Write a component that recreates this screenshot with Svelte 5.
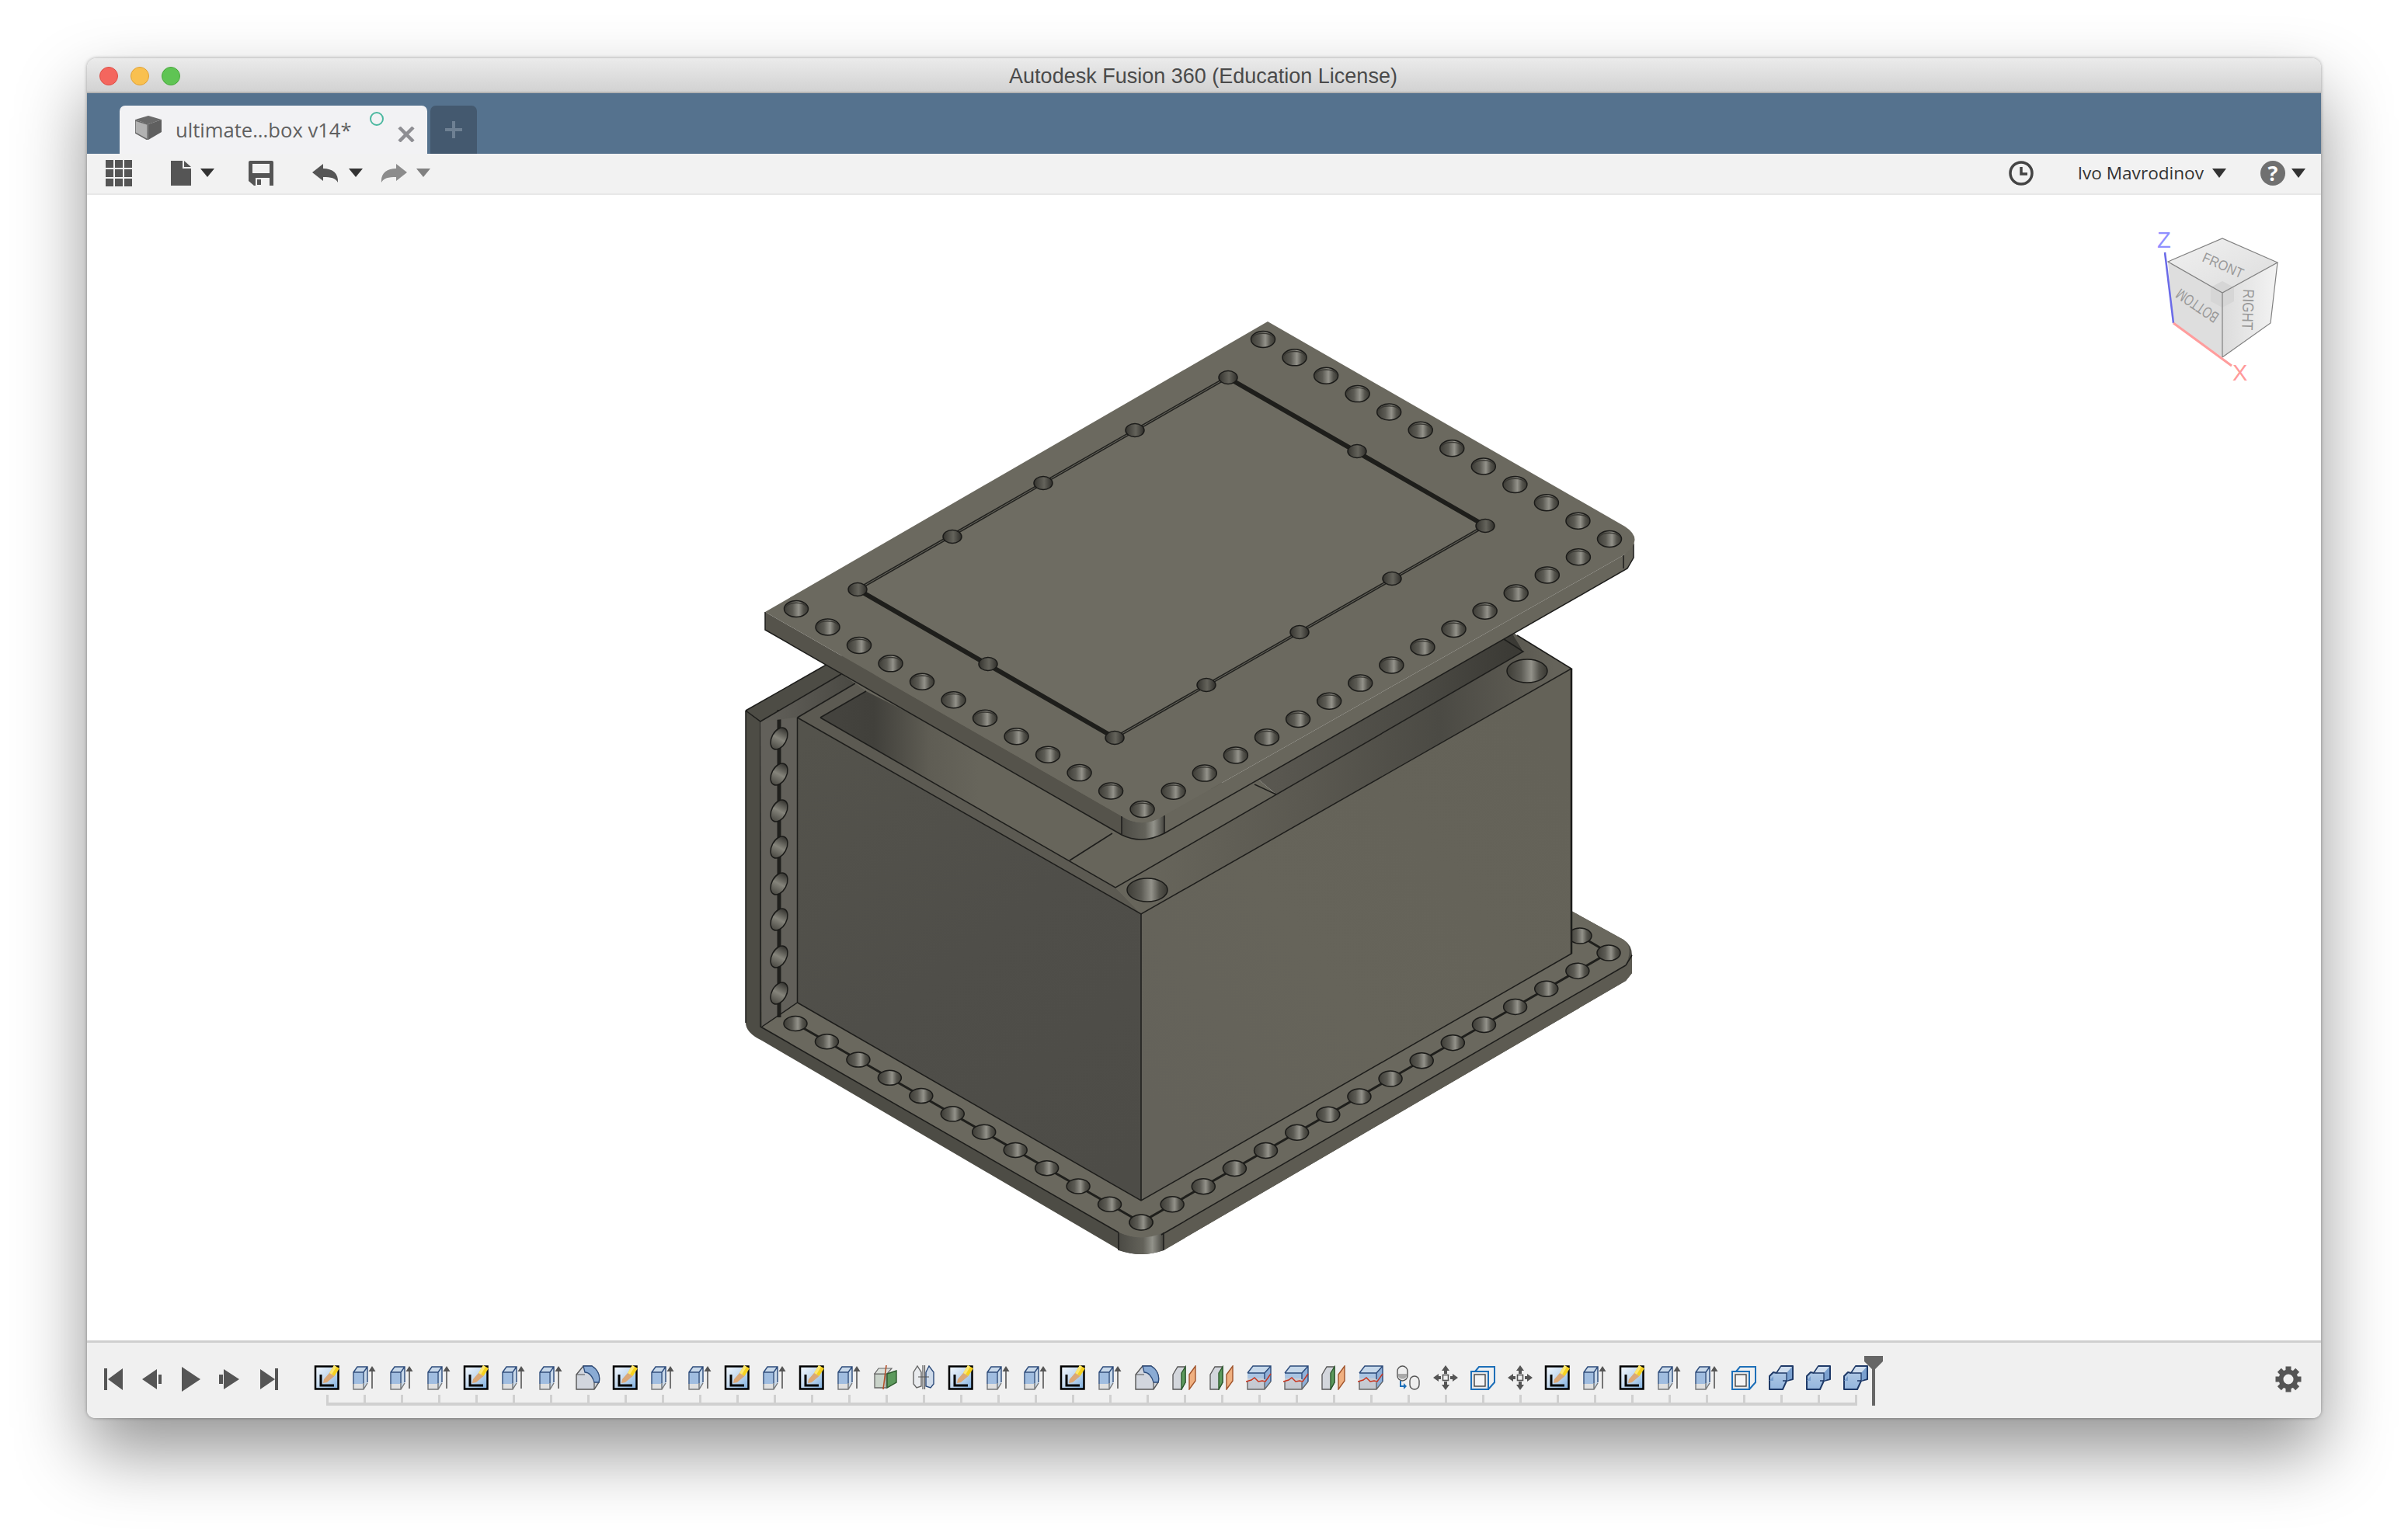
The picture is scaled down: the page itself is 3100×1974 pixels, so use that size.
<script>
  const line = (x0, y0, x1, y1, n) =>
    Array.from({ length: n }, (_, i) => [x0 + ((x1 - x0) * i) / (n - 1), y0 + ((y1 - y0) * i) / (n - 1)]);

  const lidHoles = [
    ...line(1626, 437, 2072, 694, 12),
    ...line(2072, 694, 1470.6, 1042, 16).slice(1),
    ...line(1025, 784, 1470.6, 1042, 12).slice(0, -1)
  ];
  const groovePins = [
    [1581, 486], [1461, 554], [1343, 622], [1226, 691], [1104, 759], [1272, 855], [1435, 950],
    [1553, 882], [1673, 814], [1792, 745], [1912, 677], [1747, 581]
  ];
  const lowerRight = line(1469, 1574, 2071, 1227, 16);
  const lowerLeft = line(1024, 1318, 1469, 1574, 12);
  const stripHoles = [951, 997, 1044, 1091, 1138, 1184, 1232, 1279];

  const S = 'sketch', E = 'ext', F = 'fillet', G = 'splitcube', M = 'mirror', O = 'splitface',
    W = 'wave', J = 'joint', V = 'move', C = 'copy', B = 'combine';
  const features = [
    S, E, E, E, S, E, E, F, S, E, E, S, E, S, E, G, M, S, E, E, S, E, F, O, O, W, W, O, W, J, V, C, V,
    S, E, S, E, E, C, B, B, B
  ];
</script>

<div class="page">
  <div class="window">
    <header class="titlebar">
      <svg class="lights" width="104" height="24" viewBox="0 0 104 24">
        <circle cx="12" cy="12" r="11.5" fill="#f4665e" stroke="#de4f47" />
        <circle cx="52" cy="12" r="11.5" fill="#f9c04f" stroke="#dfa239" />
        <circle cx="92" cy="12" r="11.5" fill="#5fc454" stroke="#4aa83f" />
      </svg>
      <span class="title">Autodesk Fusion 360 (Education License)</span>
    </header>

    <div class="tabbar">
      <div class="tab">
        <svg class="tabcube" width="34" height="31" viewBox="0 0 34 31">
          <path d="M0 6 L16 11 V31 L0 22 Z" fill="#b2b2b2" stroke="#666" stroke-width="1.5" />
          <path d="M0 5 L17 0 L34 5 L17 11 Z" fill="#6a6a6a" />
          <path d="M17 11 L34 5 V21 L17 31 Z" fill="#5f5f5f" />
        </svg>
        <span class="tabname">ultimate...box v14*</span>
        <svg class="tabdot" width="20" height="20" viewBox="0 0 20 20">
          <circle cx="10" cy="10" r="8" fill="none" stroke="#4cb8a0" stroke-width="2" />
        </svg>
        <svg class="tabclose" width="22" height="20" viewBox="0 0 22 20">
          <path d="M2 1 L20 19 M20 1 L2 19" stroke="#8e8e93" stroke-width="4.5" fill="none" />
        </svg>
      </div>
      <div class="newtab">
        <svg width="22" height="22" viewBox="0 0 22 22">
          <path d="M11 0 V22 M0 11 H22" stroke="#6e8093" stroke-width="4" fill="none" />
        </svg>
      </div>
    </div>

    <div class="toolbar">
      <svg class="i-grid" width="34" height="34" viewBox="0 0 34 34">
        {#each [0, 12, 24] as y}
          {#each [0, 12, 24] as x}
            <rect {x} {y} width="10" height="10" fill="#555" />
          {/each}
        {/each}
      </svg>
      <svg class="i-doc" width="26" height="32" viewBox="0 0 26 32">
        <path d="M0 0 H15 V10 H26 V32 H0 Z M17 0 L26 8 H17 Z" fill="#555" />
      </svg>
      <svg class="caret c-doc" width="18" height="11" viewBox="0 0 18 11"><path d="M0 0 H18 L9 11 Z" /></svg>
      <svg class="i-save" width="32" height="32" viewBox="0 0 32 32">
        <path fill-rule="evenodd" fill="#555" d="M2 0 H30 Q32 0 32 2 V32 H7 L0 26 V2 Q0 0 2 0 Z M5 4 V16 H27 V4 Z M9 22 V32 H27 V22 Z" />
        <rect x="11" y="24" width="5" height="7" fill="#555" />
      </svg>
      <svg class="i-undo" width="34" height="24" viewBox="0 0 34 24">
        <path d="M0 11 L14 0 V6 C26 6 34 12 33 24 C30 18 24 17 14 17 V22 Z" fill="#555" />
      </svg>
      <svg class="caret c-undo" width="18" height="11" viewBox="0 0 18 11"><path d="M0 0 H18 L9 11 Z" /></svg>
      <svg class="i-redo" width="34" height="24" viewBox="0 0 34 24">
        <path d="M34 11 L20 0 V6 C8 6 0 12 1 24 C4 18 10 17 20 17 V22 Z" fill="#8c8c8c" />
      </svg>
      <svg class="caret c-redo" width="18" height="11" viewBox="0 0 18 11"><path d="M0 0 H18 L9 11 Z" fill="#808080" /></svg>

      <svg class="i-clock" width="32" height="32" viewBox="0 0 32 32">
        <circle cx="16" cy="16" r="14" fill="none" stroke="#444" stroke-width="3.5" />
        <path d="M16 8 V17 H24" fill="none" stroke="#444" stroke-width="3.5" />
      </svg>
      <span class="user">Ivo Mavrodinov</span>
      <svg class="caret c-user" width="18" height="12" viewBox="0 0 18 12"><path d="M0 0 H18 L9 12 Z" /></svg>
      <div class="help">?</div>
      <svg class="caret c-help" width="18" height="12" viewBox="0 0 18 12"><path d="M0 0 H18 L9 12 Z" /></svg>
    </div>

    <main class="viewport">
      <svg class="scene" width="2876" height="1475" viewBox="112 251 2876 1475">
        <defs>
          <linearGradient id="hole" x1="0" x2="1" y1="0" y2="0">
            <stop offset="0" stop-color="#3e3d37" />
            <stop offset="0.35" stop-color="#5c5b54" />
            <stop offset="0.6" stop-color="#93928a" />
            <stop offset="0.8" stop-color="#55544d" />
            <stop offset="1" stop-color="#3a3933" />
          </linearGradient>
          <linearGradient id="pin" x1="0" x2="1" y1="0" y2="0">
            <stop offset="0" stop-color="#35342f" />
            <stop offset="0.55" stop-color="#64635b" />
            <stop offset="1" stop-color="#2f2e2a" />
          </linearGradient>
          <linearGradient id="slot" x1="0" x2="0" y1="0" y2="1">
            <stop offset="0" stop-color="#33322e" />
            <stop offset="0.5" stop-color="#85847b" />
            <stop offset="1" stop-color="#4a4943" />
          </linearGradient>
          <linearGradient id="cyl" x1="0" x2="1" y1="0" y2="0">
            <stop offset="0" stop-color="#4b4a44" />
            <stop offset="0.55" stop-color="#63625a" />
            <stop offset="0.75" stop-color="#92928a" />
            <stop offset="1" stop-color="#45443e" />
          </linearGradient>
          <linearGradient id="leftFace" gradientUnits="userSpaceOnUse" x1="1030" y1="950" x2="1460" y2="1500">
            <stop offset="0" stop-color="#54534c" />
            <stop offset="0.5" stop-color="#4f4e49" />
            <stop offset="1" stop-color="#4d4c47" />
          </linearGradient>
          <linearGradient id="rightFace" gradientUnits="userSpaceOnUse" x1="1469" y1="1400" x2="2023" y2="1000">
            <stop offset="0" stop-color="#64625a" />
            <stop offset="0.4" stop-color="#66645a" />
            <stop offset="1" stop-color="#646258" />
          </linearGradient>
          <linearGradient id="channel" gradientUnits="userSpaceOnUse" x1="1080" y1="0" x2="1260" y2="0">
            <stop offset="0" stop-color="#44433e" />
            <stop offset="0.25" stop-color="#41403b" />
            <stop offset="0.65" stop-color="#5f5d54" />
            <stop offset="1" stop-color="#67655b" />
          </linearGradient>
          <linearGradient id="backChannel" gradientUnits="userSpaceOnUse" x1="1640" y1="0" x2="1950" y2="0">
            <stop offset="0" stop-color="#595750" />
            <stop offset="0.6" stop-color="#4b4a44" />
            <stop offset="1" stop-color="#3b3a35" />
          </linearGradient>
          <linearGradient id="band" gradientUnits="userSpaceOnUse" x1="1480" y1="0" x2="2000" y2="0">
            <stop offset="0" stop-color="#67655b" />
            <stop offset="0.4" stop-color="#5a5850" />
            <stop offset="0.72" stop-color="#4b4a44" />
            <stop offset="0.9" stop-color="#5a5850" />
            <stop offset="1" stop-color="#65635a" />
          </linearGradient>
          <linearGradient id="flangeBack" gradientUnits="userSpaceOnUse" x1="980" y1="0" x2="1100" y2="0">
            <stop offset="0" stop-color="#62605a" />
            <stop offset="1" stop-color="#4a4943" />
          </linearGradient>
          <linearGradient id="cubeTop" x1="0" x2="1" y1="0" y2="1">
            <stop offset="0" stop-color="#f1f1f1" />
            <stop offset="1" stop-color="#dcdcdc" />
          </linearGradient>
          <linearGradient id="cubeRight" x1="0" x2="1" y1="0" y2="0">
            <stop offset="0" stop-color="#dcdcdc" />
            <stop offset="1" stop-color="#f3f3f3" />
          </linearGradient>
        </defs>

        <!-- lower part: flange -->
        <path class="flange-edge" d="M960 915 L1100 835 L2023 1173 L2090 1210 Q2101 1217 2101 1230 L2101 1253 L2093 1263 L1498 1610 Q1469 1620 1442 1610 L981 1340 Q960 1330 960 1317 Z" />
        <path class="flange-side-r" d="M1495 1590 L2093 1243 L2101 1230 L2101 1253 L2093 1263 L1498 1610 Z" />
        <path class="flange-face" d="M979 929 L1100 860 L2023 1173 L2090 1210 Q2101 1217 2096 1235 L2093 1243 L1495 1590 Q1469 1600 1440 1587 L981 1322 Z" />
        <path class="cyl" d="M1440 1587 Q1469 1600 1498 1587 V1610 Q1469 1620 1440 1610 Z" />
        <path class="edge" d="M960 915 V1317 M979 929 V1322 L1440 1587 M1495 1590 L2093 1243 M1440 1587 V1610 M1498 1587 V1610" />
        <path class="edge" d="M2093 1243 L2101 1230" />
        <path class="flange-strip" d="M979 929 L1027 924 V1291 L981 1322 Z" />

        <!-- holes in flange, with the slot that links them -->
        <path class="slot" d="M1003 914 V1310" />
        <path class="slot thin" d="M1024 1318 L1469 1574 L2071 1227 L2034 1205" />
        {#each stripHoles as y}
          <ellipse cx="1003" cy={y} rx="9.5" ry="15" transform="rotate(28 1003 {y})" fill="url(#slot)" class="hole-edge" />
        {/each}
        {#each lowerLeft as [x, y]}
          <ellipse cx={x} cy={y} rx="15" ry="9.5" fill="url(#hole)" class="hole-edge" />
        {/each}
        {#each lowerRight as [x, y]}
          <ellipse cx={x} cy={y} rx="15" ry="10" fill="url(#hole)" class="hole-edge" />
        {/each}
        <ellipse cx="2034" cy="1205" rx="15" ry="10" fill="url(#hole)" class="hole-edge" />

        <!-- box body -->
        <path fill="url(#leftFace)" d="M1026.5 924 L1469 1177 V1546 L1026.5 1291 Z" />
        <path fill="url(#rightFace)" d="M1469 1177 L2023 861 V1228 L1469 1546 Z" />
        <path class="edge" d="M1026.5 924 V1291 L1469 1546 L2023 1228 V861 M1469 1177 V1546 M981 1322 L1026.5 1291" />
        <path class="edge heavy" d="M2023 861 V1228" />

        <!-- box rim and the recess in it -->
        <path fill="url(#flangeBack)" d="M979 929 L1083 868 L1101 880 L1026.5 924 Z" />
        <path class="edge" d="M960 915 L1083 845 M960 915 L979 929 L1083 868" />
        <path class="rim" d="M1026.5 924 L1101 880 L1115 890 L1056 924 L1436 1143 L1469 1177 Z" />
        <path fill="url(#channel)" d="M1056 924 L1115 890 L1450 1060 L1377 1108 L1436 1143 Z" />
        <path class="deck" d="M1377 1108 L1432 1073 L1499 1050 L1610 995 L1643 1023 L1436 1143 Z" />
        <path fill="url(#backChannel)" d="M1610 995 L1945 805 L1961 839 L1643 1023 Z" />
        <path fill="url(#band)" d="M1436 1143 L1961 839 L1945 813 L2023 861 L1469 1177 Z" />
        <path class="edge" d="M1026.5 924 L1469 1177 L2023 861 L1953 818 M1056 924 L1436 1143 L1961 839 L1936 823 M1056 924 L1115 890 M1026.5 924 L1101 880 M1377 1108 L1432 1073 M1615 1010 L1643 1023" />
        <ellipse cx="1477" cy="1146" rx="26" ry="15" fill="url(#hole)" class="hole-edge" />
        <ellipse cx="1966" cy="864" rx="26" ry="15" fill="url(#hole)" class="hole-edge" />

        <!-- lid -->
        <path class="lid-left" d="M985 788 L1444 1051 V1075 L985 811 Z" />
        <path class="lid-right" d="M1499 1050 L2090 715 L2103 700 V718 L2095 732 L1499 1073 Z" />
        <path class="cyl" d="M1444 1051 Q1470 1068 1499 1050 V1073 Q1470 1088 1444 1075 Z" />
        <path class="edge" d="M985 788 V811 L1444 1075 Q1470 1088 1499 1073 L2095 732 L2103 718 V700 M1444 1051 V1075 M1499 1050 V1073 M2090 715 V732" />
        <path class="lid-top" d="M1632 414 L2092 678 Q2118 695 2090 715 L1499 1050 Q1470 1068 1444 1051 L985 788 Z" />
        <path class="panel-slot" d="M1580 486 L1912 677 L1435 950 L1104 759 Z" />
        <path class="panel-heavy" d="M1104 759 L1435 950 M1580 486 L1912 677" />
        <path class="panel-light" d="M1104 759 L1580 486 M1435 950 L1912 677" />
        {#each groovePins as [x, y]}
          <ellipse cx={x} cy={y} rx="12" ry="8.5" fill="url(#pin)" class="hole-edge" />
        {/each}
        {#each lidHoles as [x, y]}
          <ellipse cx={x} cy={y} rx="15.5" ry="10.5" fill="url(#hole)" class="hole-edge" />
          <path class="hole-top" d="M{x - 14} {y - 2} A15 9 0 0 1 {x + 14} {y - 2}" />
        {/each}

        <!-- view cube -->
        <g class="cube">
          <path d="M2791 337 L2861 307 L2932 338 L2861 377 Z" fill="url(#cubeTop)" />
          <path d="M2791 337 L2861 377 V460 L2797 416 Z" fill="#dedede" />
          <path d="M2861 377 L2932 338 L2923 416 L2861 460 Z" fill="url(#cubeRight)" />
          <path class="cube-corner" d="M2861 362 L2876 370 V388 L2861 396 L2846 388 V370 Z" />
          <path class="cube-edge" d="M2791 337 L2861 307 L2932 338 L2861 377 Z M2861 377 V460 M2932 338 L2923 416 L2861 460" />
          <text class="cube-text" transform="translate(2834 336) rotate(24) scale(.9 1)" font-size="18">FRONT</text>
          <text class="cube-text" transform="translate(2858 405) rotate(214) scale(.72 1)" font-size="20">BOTTOM</text>
          <text class="cube-text" transform="translate(2888 372) rotate(92) scale(.85 1)" font-size="20">RIGHT</text>
          <path d="M2787 325 L2798 416" stroke="#6a6ae8" stroke-width="2.5" fill="none" />
          <path d="M2798 416 L2873 471" stroke="#ff9d9d" stroke-width="3" fill="none" />
          <text class="axis z" x="2777" y="319">Z</text>
          <text class="axis x" x="2874" y="490">X</text>
        </g>
      </svg>
    </main>

    <footer class="timebar">
      <svg class="controls" width="224" height="32" viewBox="0 0 224 32">
        <path d="M0 2 H4 V30 H0 Z M5 16 L24 2 V30 Z" />
        <path d="M49 16 L68 3 V29 Z M70 10 H74 V22 H70 Z" />
        <path d="M100 0 L124 16 L100 32 Z" />
        <path d="M148 10 H153 V22 H148 Z M154 3 L174 16 L154 29 Z" />
        <path d="M201 3 L220 16 L201 29 Z M220 2 H224 V30 H220 Z" />
      </svg>

      <div class="timeline">
        <div class="features">
          {#each features as f}
            <div class="feature">
              <svg width="34" height="32" viewBox="0 0 34 32"><use href="#ic-{f}" /></svg>
              <div class="tick"></div>
            </div>
          {/each}
        </div>
        <div class="rail"></div>
        <svg class="marker" width="24" height="64" viewBox="0 0 24 64">
          <path d="M0 0 H24 V7 L14 17 V64 H10 V17 L0 7 Z" fill="#666" />
        </svg>
      </div>

      <svg class="gear" width="34" height="34" viewBox="-17 -17 34 34">
        <g fill="#555">
          {#each [0, 45, 90, 135, 180, 225, 270, 315] as a}
            <rect x="-3.5" y="-16.5" width="7" height="7" transform="rotate({a})" />
          {/each}
        </g>
        <circle r="9.5" fill="none" stroke="#555" stroke-width="6" />
      </svg>
    </footer>
  </div>

  <svg class="symbols" width="0" height="0">
    <defs>
      <linearGradient id="skBg" x1="0" y1="0" x2="1" y2="1">
        <stop offset="0" stop-color="#f4f8fc" />
        <stop offset="0.5" stop-color="#c3d9ef" />
        <stop offset="1" stop-color="#7fb0e0" />
      </linearGradient>
      <linearGradient id="cmb" x1="0" y1="0" x2="0" y2="1">
        <stop offset="0" stop-color="#b7cde6" />
        <stop offset="1" stop-color="#94b6de" />
      </linearGradient>
      <linearGradient id="wv" x1="0" y1="0" x2="0" y2="1">
        <stop offset="0" stop-color="#a9c4e2" />
        <stop offset="0.5" stop-color="#a9c4e2" />
        <stop offset="0.55" stop-color="#c8ccd4" />
        <stop offset="1" stop-color="#c4c8d0" />
      </linearGradient>

      <symbol id="ic-sketch" viewBox="0 0 34 32">
        <rect x="2" y="1.5" width="29.5" height="29" fill="url(#skBg)" stroke="#000" stroke-width="2.5" />
        <path d="M9 12 V26 H26" fill="none" stroke="#000" stroke-width="3" />
        <path d="M26 0 L33 4 L26.5 14 L20 10 Z" fill="#f6d21e" />
        <path d="M26 0 L29 2 L23 12 L20 10 Z" fill="#fbe774" />
        <path d="M20 10 L26.5 14 L17 22 L12 23 L13 18 Z" fill="#dba877" />
      </symbol>

      <symbol id="ic-ext" viewBox="0 0 34 32">
        <path d="M3 9 L8 2 H21 V23 L16 31 H3 Z" fill="#c9d9ea" />
        <path d="M4 10 H15 V24 H4 Z" fill="#a0bde0" />
        <path d="M4 24 H15 V30 H4 Z" fill="#e0e0e0" />
        <path d="M3 24 V9 L8 2 H21 V22 M3 9 H16 L21 2 M16 9 V23" fill="none" stroke="#2b4a7a" stroke-width="1.4" />
        <path d="M3 24 V31 H16 L21 23 M16 23 V31" fill="none" stroke="#777" stroke-width="1.4" />
        <path d="M27 8 V30" stroke="#555" stroke-width="1.6" fill="none" />
        <path d="M22.5 8 L27 1 L31.5 8 Z" fill="#555" />
      </symbol>

      <symbol id="ic-fillet" viewBox="0 0 34 32">
        <path d="M2 31 V12 L11 1 H22 C30 6 33 14 31 22 L25 31 Z" fill="#d2d6de" stroke="#555" stroke-width="1.4" />
        <path d="M11 1 L13 9 C18 9 23 14 25 22 L31 22 C33 14 30 6 22 1 Z" fill="#8aabd4" stroke="#2b4a7a" stroke-width="1.3" />
        <path d="M2 12 H13 M25 22 V31" fill="none" stroke="#555" stroke-width="1.2" />
      </symbol>

      <symbol id="ic-splitcube" viewBox="0 0 34 32">
        <path d="M2 11 H17 V29 H2 Z" fill="#c9d3c9" stroke="#666" stroke-width="1.3" />
        <path d="M7 4 H24 L18 11 H2 Z" fill="#dbe0db" stroke="#666" stroke-width="1.2" />
        <path d="M18 11 L30 7 V22 L18 29 Z" fill="#5d9a5d" stroke="#2d5b2d" stroke-width="1.4" />
        <path d="M17 0 L13 31" stroke="#b3502a" stroke-width="1.6" fill="none" />
      </symbol>

      <symbol id="ic-mirror" viewBox="0 0 34 32">
        <path d="M4 9 L9 1 L14 9 V27 L8 29 L4 24 Z" fill="#e9ebee" stroke="#666" stroke-width="1.4" />
        <path d="M20 9 L24 1 L30 9 V24 L26 29 L20 27 Z" fill="#cfdbea" stroke="#2b4a7a" stroke-width="1.4" />
        <path d="M16 0 V31 M18.5 0 V31 M10 15 H24" stroke="#555" stroke-width="1.2" fill="none" />
      </symbol>

      <symbol id="ic-splitface" viewBox="0 0 34 32">
        <path d="M2 12 L8 2 H18 V22 L13 31 H2 Z" fill="#d3d6dc" stroke="#555" stroke-width="1.3" />
        <path d="M13 10 L18 2 V22 L13 31 Z" fill="#5d9a5d" stroke="#2d5b2d" stroke-width="1.4" />
        <path d="M23 31 V12 L31 1 V20 Z" fill="#f0b080" stroke="#a0532a" stroke-width="1.4" />
      </symbol>

      <symbol id="ic-wave" viewBox="0 0 34 32">
        <path d="M2 10 L9 1 H32 V21 L24 31 H2 Z" fill="url(#wv)" />
        <path d="M2 10 L9 1 H32 L24 10 Z" fill="#c6d8ea" />
        <path d="M24 10 L32 1 V21 L24 31 Z" fill="#8fb0d8" />
        <path d="M2 10 L9 1 H32 V21 M2 10 H24 L32 1 M24 10 V18" fill="none" stroke="#2b4a7a" stroke-width="1.4" />
        <path d="M2 21 V31 H24 L32 21 M24 22 V31" fill="none" stroke="#666" stroke-width="1.4" />
        <path d="M0 21 L7 19 L11 16 L16 21 L21 20 L25 21 L32 11" fill="none" stroke="#c8341e" stroke-width="1.5" />
      </symbol>

      <symbol id="ic-joint" viewBox="0 0 34 32">
        <rect x="3" y="1" width="13" height="19" rx="6.5" fill="#eee" stroke="#555" stroke-width="1.4" />
        <path d="M4 11 H15 V14 a6 6 0 0 1 -11 0 Z" fill="#aaa" />
        <rect x="19" y="14" width="12" height="17" rx="6" fill="#eee" stroke="#555" stroke-width="1.4" />
        <path d="M7 20 V27 H14" fill="none" stroke="#1d6fb8" stroke-width="2" />
        <path d="M11 23 L15 27 L11 31" fill="#1d6fb8" />
      </symbol>

      <symbol id="ic-move" viewBox="0 0 34 32">
        <path d="M17 0 L22 7 H19 V11 H15 V7 H12 Z M17 32 L22 25 H19 V21 H15 V25 H12 Z M1 16 L8 11 V14 H11 V18 H8 V21 Z M33 16 L26 11 V14 H23 V18 H26 V21 Z" fill="#555" />
        <rect x="13.5" y="12.5" width="7" height="7" fill="none" stroke="#555" stroke-width="1.6" />
      </symbol>

      <symbol id="ic-copy" viewBox="0 0 34 32">
        <path d="M2 8 H24 V31 H2 Z" fill="#e8e8e8" stroke="#1d6fb8" stroke-width="2" />
        <path d="M7 8 L12 2 H32 V22 L24 31" fill="none" stroke="#1d6fb8" stroke-width="2" />
        <rect x="6" y="12" width="14" height="15" fill="#f4f4f4" stroke="#444" stroke-width="1.4" />
      </symbol>

      <symbol id="ic-combine" viewBox="0 0 34 32">
        <path d="M11 10 L17 1 H32 V18 L24 20 L19 31 H2 V14 L7 9 Z" fill="url(#cmb)" stroke="#1f3a68" stroke-width="2" stroke-linejoin="round" />
        <path d="M12 10 L17 2 H31 L24 10 Z" fill="#d0deee" />
        <path d="M2 20 L7 14 V20 Z M24 10 L31 2 V17 L24 20 Z" fill="#7aa0cf" />
        <path d="M12 10 H24 V20 H19" fill="none" stroke="#1f3a68" stroke-width="1.3" />
      </symbol>
    </defs>
  </svg>
</div>

<style>
  :global(body) {
    margin: 0;
    background: #fff;
  }

  .page {
    width: 3100px;
    height: 1974px;
    padding: 75px 112px 0;
    box-sizing: border-box;
    overflow: hidden;
    background: #fff;
  }

  .window {
    display: flex;
    flex-direction: column;
    width: 2876px;
    height: 1751px;
    border-radius: 12px 12px 10px 10px;
    overflow: hidden;
    box-shadow: 0 44px 90px rgba(0, 0, 0, 0.42), 0 0 4px rgba(0, 0, 0, 0.35);
  }

  .titlebar {
    position: relative;
    flex: none;
    display: flex;
    align-items: center;
    justify-content: center;
    height: 45px;
    box-sizing: border-box;
    background: linear-gradient(#ebebeb, #d2d2d2);
    border-bottom: 2px solid #b5b5b5;
  }

  .lights {
    position: absolute;
    left: 16px;
    top: 11px;
  }

  .title {
    font: 27px "Liberation Sans", Arial, sans-serif;
    color: #4a4a4a;
    margin: 4px 0 0 -2px;
  }

  .tabbar {
    flex: none;
    display: flex;
    align-items: flex-end;
    gap: 4px;
    height: 78px;
    padding-left: 42px;
    background: #55728e;
  }

  .tab {
    display: flex;
    align-items: center;
    width: 396px;
    height: 62px;
    border-radius: 7px 7px 0 0;
    background: #f2f2f4;
  }

  .tabcube {
    margin: -6px 0 0 20px;
    flex: none;
  }

  .tabname {
    margin-left: 18px;
    font: 25.6px "Open Sans", sans-serif;
    color: #606060;
    white-space: nowrap;
  }

  .tabdot {
    position: relative;
    top: -14px;
    margin-left: 22px;
    flex: none;
  }

  .tabclose {
    margin: 11px 0 0 17px;
    flex: none;
  }

  .newtab {
    display: flex;
    align-items: center;
    justify-content: center;
    width: 60px;
    height: 62px;
    border-radius: 7px 7px 0 0;
    background: #44596f;
  }

  .toolbar {
    flex: none;
    display: flex;
    align-items: center;
    height: 53px;
    box-sizing: border-box;
    padding: 0 20px 2px 24px;
    background: #f2f2f2;
    border-bottom: 2px solid #e8e8e8;
  }

  .caret path {
    fill: #333;
  }

  .c-redo path {
    fill: #808080;
  }

  .i-doc { margin-left: 50px; }
  .c-doc { margin-left: 12px; }
  .i-save { margin-left: 44px; }
  .i-undo { margin-left: 50px; }
  .c-undo { margin-left: 13px; }
  .i-redo { margin-left: 23px; }
  .c-redo { margin-left: 12px; }
  .i-clock { margin-left: auto; }
  .c-user { margin-left: 11px; }
  .c-help { margin-left: 8px; }

  .user {
    margin-left: 57px;
    font: 22.6px "Open Sans", sans-serif;
    color: #333;
    white-space: nowrap;
  }

  .help {
    display: flex;
    align-items: center;
    justify-content: center;
    width: 32px;
    height: 32px;
    margin-left: 44px;
    border-radius: 50%;
    background: #707070;
    color: #fff;
    font: bold 27px "Open Sans", sans-serif;
  }

  .viewport {
    flex: none;
    height: 1475px;
    background: #fff;
  }

  .scene {
    display: block;
  }

  .edge {
    fill: none;
    stroke: #1d1d1b;
    stroke-width: 1.5;
  }

  .edge.heavy {
    stroke-width: 2.5;
  }

  .flange-edge { fill: #4d4c45; }
  .flange-side-r { fill: #5d5b52; }
  .flange-face { fill: #6a685e; }
  .flange-strip { fill: #62605a; }
  .rim { fill: #5c5a52; }
  .deck { fill: #67655b; }
  .lid-left { fill: #55534b; }
  .lid-right { fill: #68665c; }
  .lid-top { fill: #6b695f; }

  .cyl {
    fill: url(#cyl);
  }

  .slot {
    fill: none;
    stroke: #1f1f1c;
    stroke-width: 5;
  }

  .slot.thin {
    stroke-width: 3;
  }

  .hole-edge {
    stroke: #1b1b19;
    stroke-width: 1.5;
  }

  .hole-top {
    fill: none;
    stroke: #3a3934;
    stroke-width: 1.5;
  }

  .panel-slot {
    fill: #6e6c62;
    stroke: #232320;
    stroke-width: 4;
    stroke-linejoin: round;
  }

  .panel-heavy {
    fill: none;
    stroke: #1e1e1b;
    stroke-width: 6;
  }

  .panel-light {
    fill: none;
    stroke: #6a6960;
    stroke-width: 1;
  }

  .cube-edge {
    fill: none;
    stroke: #808080;
    stroke-width: 1.2;
  }

  .cube-corner {
    fill: #d6d6d6;
  }

  .cube-text {
    font-family: "Liberation Sans", sans-serif;
    fill: #999;
  }

  .axis {
    font: 29px "Liberation Sans", sans-serif;
  }

  .axis.z { fill: #8f8fff; }
  .axis.x { fill: #ff9a9a; }

  .timebar {
    flex: none;
    height: 100px;
    display: flex;
    align-items: flex-start;
    box-sizing: border-box;
    padding: 29px 25px 0 22px;
    background: #f0f0f0;
    border-top: 3px solid #cfcfcf;
  }

  .controls {
    flex: none;
    fill: #555;
    margin-top: 2px;
  }

  .timeline {
    position: relative;
    flex: none;
    margin-left: 39px;
  }

  .features {
    display: flex;
  }

  .feature {
    display: flex;
    flex-direction: column;
    align-items: center;
    width: 48px;
  }

  .feature svg {
    display: block;
  }

  .tick {
    width: 3px;
    height: 10px;
    margin-top: 6px;
    background: #d0d0d0;
  }

  .rail {
    width: 1971px;
    height: 4px;
    margin-left: 22.5px;
    background: #d0d0d0;
  }

  .marker {
    position: absolute;
    left: 2003px;
    top: -12px;
  }

  .gear {
    flex: none;
    margin: 1px 0 0 auto;
  }

  .symbols {
    position: absolute;
  }
</style>
